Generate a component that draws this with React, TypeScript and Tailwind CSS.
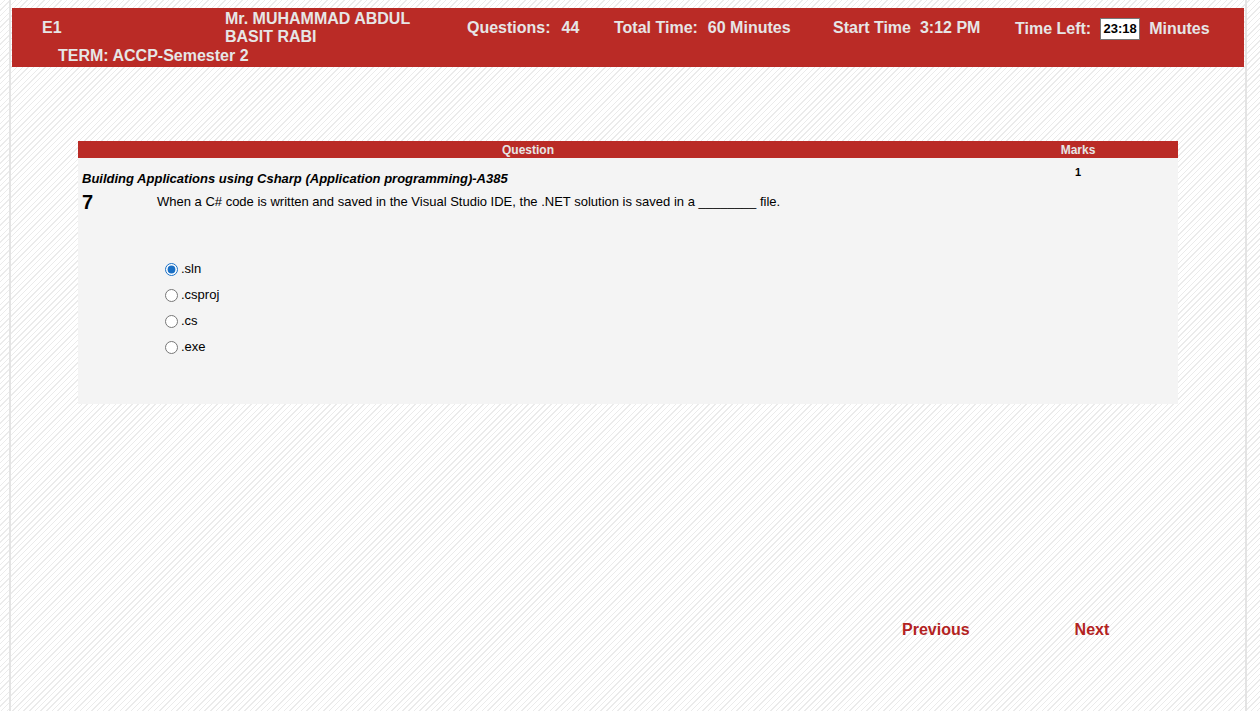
import React from "react";

const options = [".sln", ".csproj", ".cs", ".exe"];

export default function App() {
  return (
    <div
      className="w-full h-[711px] overflow-hidden bg-[repeating-linear-gradient(135deg,#ffffff_0px,#ffffff_3px,#ebebeb_3px,#ebebeb_4px)]"
      style={{ fontFamily: '"Liberation Sans", Arial, sans-serif' }}
    >
      <div className="ml-[9px] mr-[13px] h-[711px] border-x-2 border-[#e4e4e4] pt-[8px]">
        {/* Header */}
        <div className="mx-px h-[59px] bg-[#ba2b26] pt-[2px] text-[16px] font-bold text-[#e6e6e6]">
          <div className="flex h-[36px] items-center leading-[18px]">
            <div className="ml-[30px] w-[183px]">E1</div>
            <div className="w-[242px]">
              <div>Mr. MUHAMMAD ABDUL</div>
              <div>BASIT RABI</div>
            </div>
            <div className="w-[147px]">
              Questions:<span className="ml-[11px]">44</span>
            </div>
            <div className="w-[219px]">
              Total Time:<span className="ml-[10px]">60 Minutes</span>
            </div>
            <div className="w-[182px]">
              Start Time<span className="ml-[9px]">3:12 PM</span>
            </div>
            <div className="flex items-center pt-[2px]">
              <span>Time Left:</span>
              <span className="ml-[9px] flex h-[22px] w-[40px] items-center justify-center border border-[#777777] bg-white text-[13px] text-black">
                23:18
              </span>
              <span className="ml-[9px]">Minutes</span>
            </div>
          </div>
          <div className="ml-[46px] mt-px leading-[18px]">TERM: ACCP-Semester 2</div>
        </div>

        {/* Question table */}
        <div className="ml-[67px] mt-[74px] w-[1100px]">
          <div className="flex h-[17px] items-center bg-[#ba2b26] text-[12px] font-bold text-[#e6e6e6]">
            <div className="w-[900px] text-center">Question</div>
            <div className="w-[200px] text-center">Marks</div>
          </div>
          <div className="flex h-[246px] bg-[#f4f4f4] text-black">
            <div className="w-[900px] pl-[4px] pt-[13px]">
              <div className="text-[13px] font-bold italic leading-[16px]">
                Building Applications using Csharp (Application programming)-A385
              </div>
              <div className="mt-[4px] flex items-center leading-[22px]">
                <div className="w-[75px] text-[20px] font-bold">7</div>
                <div className="text-[13px]">
                  When a C# code is written and saved in the Visual Studio IDE, the .NET solution is saved in a ________ file.
                </div>
              </div>
              <div className="ml-[83px] mt-[43px]">
                {options.map((o, i) => (
                  <label key={o} className="flex h-[26px] items-center text-[13px]">
                    <input
                      type="radio"
                      name="answer"
                      defaultChecked={i === 0}
                      className="m-0 h-[13px] w-[13px] accent-[#1a6fc4]"
                    />
                    <span className="ml-[3px]">{o}</span>
                  </label>
                ))}
              </div>
            </div>
            <div className="w-[200px] pt-[8px] text-center text-[11px] font-bold leading-[13px]">1</div>
          </div>
        </div>

        {/* Navigation */}
        <div className="ml-[891px] mt-[216px] flex text-[16px] font-bold leading-[20px] text-[#b3231f]">
          <span>Previous</span>
          <span className="ml-[105px]">Next</span>
        </div>
      </div>
    </div>
  );
}
